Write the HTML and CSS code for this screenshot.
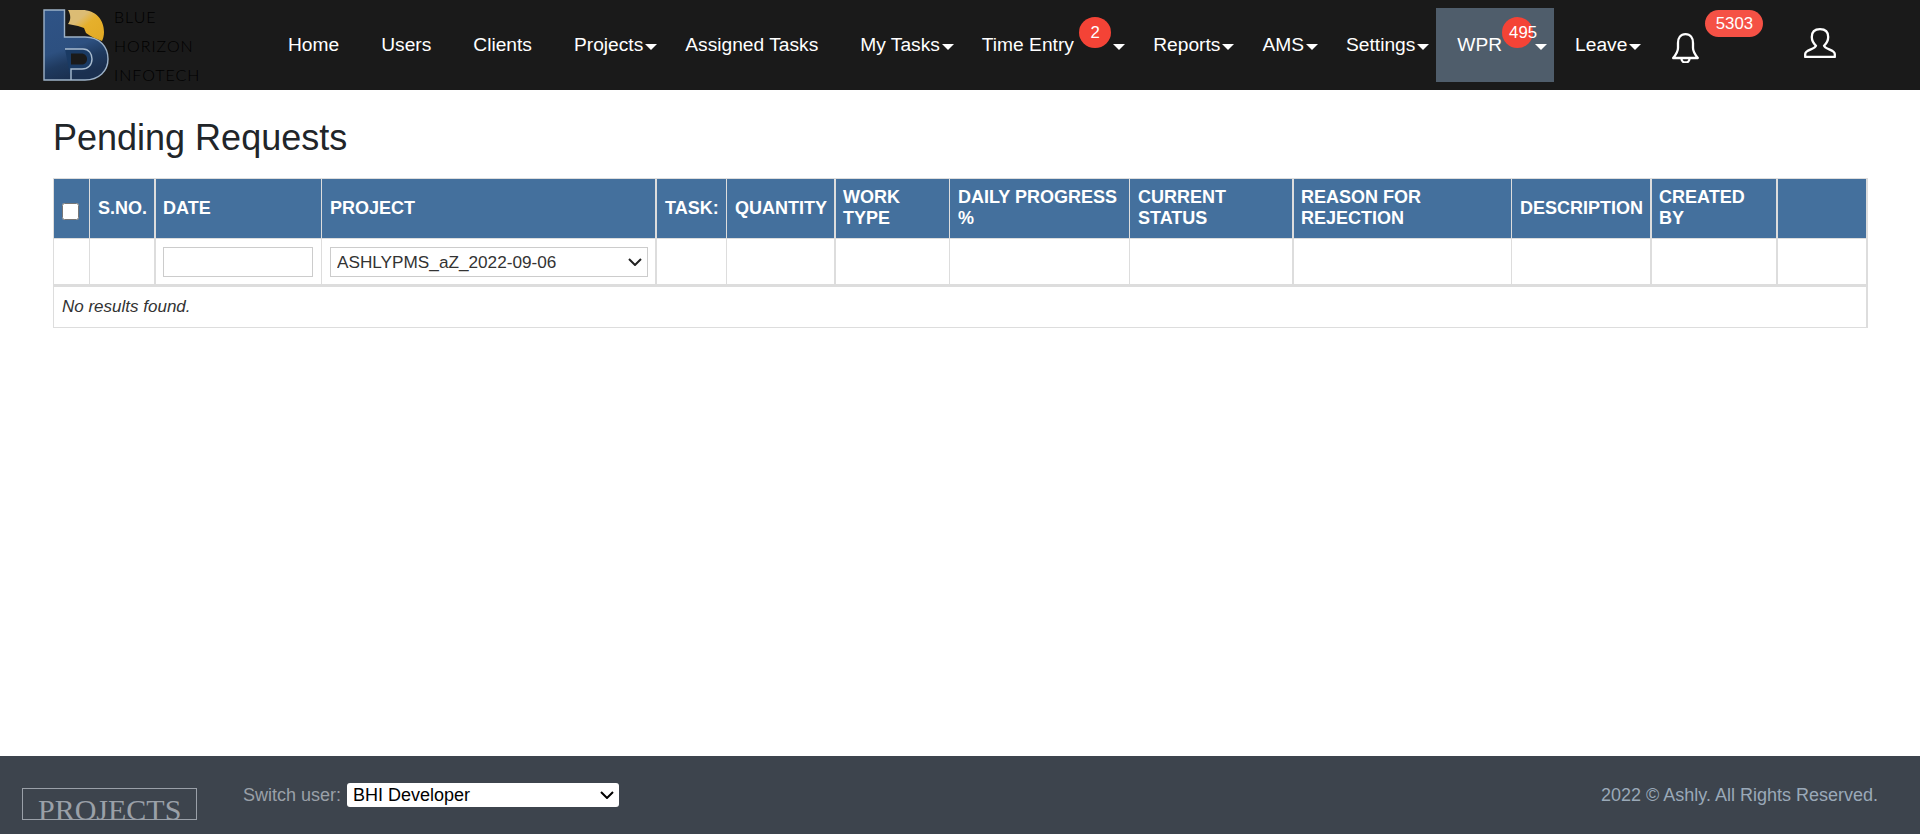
FILE: index.html
```html
<!DOCTYPE html>
<html lang="en">
<head>
<meta charset="utf-8">
<title>Pending Requests</title>
<link rel="stylesheet" href="styles.css">
</head>
<body>
<header class="topbar">
  <a class="brand" href="#">
    <svg class="brand-mark" viewBox="0 0 66 72" aria-hidden="true">
      <defs>
        <linearGradient id="blueFill" x1="0" y1="0" x2="0.3" y2="1">
          <stop offset="0" stop-color="#2f5386"/>
          <stop offset="0.6" stop-color="#2d5080"/>
          <stop offset="0.8" stop-color="#1f3a5f"/>
          <stop offset="1" stop-color="#1b3050"/>
        </linearGradient>
        <linearGradient id="goldFill" x1="0" y1="0" x2="1" y2="1">
          <stop offset="0.3" stop-color="#dcbc74"/>
          <stop offset="0.5" stop-color="#e6b02c"/>
          <stop offset="1" stop-color="#e2a923"/>
        </linearGradient>
      </defs>
      <path d="M1 1H21.500V28H42C57 28 65 38 65 50C65 62 56 71 42 71H1Z" fill="url(#blueFill)" stroke="#9db2c8" stroke-width="1.400"/>
      <path d="M22 40H40C46 40 49 45 49 50C49 56 45 60 39 60H28V71" fill="#1a3a63" stroke="#a9bccf" stroke-width="1.400"/>
      <path d="M28 44.500H38C42 44.500 44 47 44 50C44 53.500 42 55.500 38 55.500H28Z" fill="#1a1a1a"/>
      <path d="M25 1H39C53 1 61 11 61 23C61 27 60 30 59 32C53 30 47 27 43 24L41 19L35 17L25 15C28 11 28 6 25 1Z" fill="url(#goldFill)"/>
    </svg>
    <span class="brand-name">
      <span>BLUE</span>
      <span>HORIZON</span>
      <span>INFOTECH</span>
    </span>
  </a>

  <nav class="nav">
    <a class="nav-item" href="#">Home</a>
    <a class="nav-item" href="#">Users</a>
    <a class="nav-item" href="#">Clients</a>
    <a class="nav-item" href="#"><span class="label caret">Projects</span></a>
    <a class="nav-item" href="#">Assigned Tasks</a>
    <a class="nav-item" href="#"><span class="label caret">My Tasks</span></a>
    <a class="nav-item" href="#"><span class="label caret">Time Entry <span class="badge badge-time">2</span></span></a>
    <a class="nav-item" href="#"><span class="label caret">Reports</span></a>
    <a class="nav-item" href="#"><span class="label caret">AMS</span></a>
    <a class="nav-item" href="#"><span class="label caret">Settings</span></a>
    <a class="nav-item nav-item-active" href="#"><span class="label caret">WPR<span class="badge badge-wpr">495</span></span></a>
    <a class="nav-item" href="#"><span class="label caret">Leave</span></a>
    <a class="bell" href="#">
      <svg class="bell-icon" viewBox="0 0 27 30" aria-hidden="true">
        <path d="M13.500 1.200C8.500 1.200 6 5 6 10V15C6 19 4 21.500 1.200 25H25.800C23 21.500 21 19 21 15V10C21 5 18.500 1.200 13.500 1.200Z"/>
        <path d="M9.500 25.500A4 4 0 0 0 17.500 25.500"/>
      </svg>
      <span class="badge-count">5303</span>
    </a>
    <a class="user" href="#">
      <svg class="user-icon" viewBox="0 0 32 30" aria-hidden="true">
        <path d="M1.200 29V26C1.200 21.500 11 21.500 12 17.800C9 15 7.800 11.500 7.800 9C7.800 4 11 1.200 16 1.200C21 1.200 24.200 4 24.200 9C24.200 11.500 23 15 20 17.800C21 21.500 30.800 21.500 30.800 26V29Z"/>
      </svg>
    </a>
  </nav>
</header>

<main class="content">
  <h1 class="title">Pending Requests</h1>
  <table class="grid">
    <colgroup>
      <col class="c-check"><col class="c-sno"><col class="c-date"><col class="c-project"><col class="c-task"><col class="c-qty"><col class="c-type"><col class="c-progress"><col class="c-status"><col class="c-reason"><col class="c-desc"><col class="c-by"><col class="c-action">
    </colgroup>
    <thead>
      <tr class="head-row">
        <th class="check-cell"><input class="check" type="checkbox"></th>
        <th>S.NO.</th>
        <th class="thick">DATE</th>
        <th>PROJECT</th>
        <th class="thick task-cell">TASK:</th>
        <th>QUANTITY</th>
        <th class="thick">WORK TYPE</th>
        <th>DAILY PROGRESS %</th>
        <th>CURRENT STATUS</th>
        <th class="thick">REASON FOR REJECTION</th>
        <th>DESCRIPTION</th>
        <th class="thick">CREATED BY</th>
        <th class="thick"></th>
      </tr>
      <tr class="filter-row">
        <td></td>
        <td></td>
        <td class="thick"><input class="field" type="text"></td>
        <td class="project-cell"><select class="field field-select"><option>ASHLYPMS_aZ_2022-09-06</option></select></td>
        <td class="thick"></td>
        <td></td>
        <td class="thick"></td>
        <td></td>
        <td></td>
        <td class="thick"></td>
        <td></td>
        <td class="thick"></td>
        <td class="thick"></td>
      </tr>
    </thead>
    <tbody>
      <tr class="empty-row">
        <td colspan="13">No results found.</td>
      </tr>
    </tbody>
  </table>
</main>

<footer class="footer">
  <div class="footer-logo">PROJECTS</div>
  <label class="switch">Switch user:
    <select class="switch-select"><option>BHI Developer</option></select>
  </label>
  <p class="copyright">2022 © Ashly. All Rights Reserved.</p>
</footer>
</body>
</html>
```
FILE: styles.css
```css
* { box-sizing: border-box; }

html, body { height: 100%; }

body {
  margin: 0;
  display: flex;
  flex-direction: column;
  min-height: 100vh;
  font-family: "Liberation Sans", Arial, sans-serif;
  color: #212529;
  background: #fff;
}

a { color: inherit; text-decoration: none; }

.topbar {
  flex: none;
  height: 90px;
  background: #1a1a1a;
  display: flex;
  align-items: center;
  padding-left: 43px;
}

.brand {
  width: 224px;
  height: 90px;
  display: flex;
  align-items: flex-start;
  gap: 5px;
  overflow: hidden;
}

.brand-mark {
  width: 66px;
  height: 72px;
  margin-top: 9px;
  flex: none;
}

.brand-name {
  display: flex;
  flex-direction: column;
  margin-top: 2px;
  font-family: Lato, "Liberation Sans", sans-serif;
  font-weight: 300;
  font-size: 16px;
  line-height: 29px;
  letter-spacing: 1px;
  color: #000;
}

.nav {
  display: flex;
  align-items: center;
  font-size: 19.2px;
  color: #fff;
}

.nav-item {
  height: 74px;
  padding: 0 21px;
  display: flex;
  align-items: center;
  white-space: nowrap;
}

.nav-item-active { background: #4f5d6b; }

.label { position: relative; display: block; }

.caret::after {
  content: "";
  position: absolute;
  left: 100%;
  top: 10px;
  margin-left: 2px;
  border-top: 6px solid #fff;
  border-left: 6px solid transparent;
  border-right: 6px solid transparent;
}

.badge {
  display: inline-block;
  vertical-align: top;
  height: 31px;
  margin-top: -17px;
  margin-bottom: -17px;
  border-radius: 50%;
  background: #f44336;
  font-size: 16.800px;
  line-height: 31px;
  color: #fff;
}

.badge-time { width: 32px; text-align: center; }
.badge-wpr { width: 31px; padding-left: 7px; white-space: nowrap; }

.bell {
  position: relative;
  display: block;
  margin-left: 24px;
  width: 27px;
  height: 30px;
  margin-top: 6px;
}

.bell-icon, .user-icon {
  display: block;
  fill: none;
  stroke: #fff;
  stroke-width: 2.300;
  stroke-linejoin: round;
}

.bell-icon { width: 27px; height: 30px; }

.badge-count {
  position: absolute;
  left: 33px;
  top: -23px;
  width: 58px;
  height: 27px;
  border-radius: 14px;
  background: #f55145;
  font-size: 16.800px;
  line-height: 27px;
  text-align: center;
  color: #fff;
}

.user { display: block; margin-left: 105px; margin-top: -4px; }
.user-icon { width: 32px; height: 30px; }

.content {
  flex: 1;
  padding: 26px 53px 0;
}

.title {
  margin: 0 0 19px;
  font-size: 36px;
  font-weight: 400;
  line-height: 43px;
  color: #212529;
}

.grid {
  width: 1812px;
  table-layout: fixed;
  border-collapse: separate;
  border-spacing: 0;
  border-top: 1px solid #ddd;
  border-left: 1px solid #ddd;
  border-right: 2px solid #ddd;
  border-bottom: 1px solid #ddd;
}

.c-check { width: 35px; }
.c-sno { width: 65px; }
.c-date { width: 167px; }
.c-project { width: 334px; }
.c-task { width: 71px; }
.c-qty { width: 108px; }
.c-type { width: 115px; }
.c-progress { width: 180px; }
.c-status { width: 163px; }
.c-reason { width: 219px; }
.c-desc { width: 139px; }
.c-by { width: 126px; }
.c-action { width: 90px; }

.grid th, .grid td { padding: 0 8px; }

.grid th {
  height: 60px;
  background: #44709d;
  color: #fff;
  font-size: 18px;
  font-weight: 700;
  line-height: 21px;
  text-align: left;
  vertical-align: middle;
  padding-bottom: 1px;
}

.grid th + th { border-left: 1px solid #ddd; }
.grid th.thick, .grid td.thick { border-left-width: 2px; padding-left: 7px; }
.grid th.task-cell { padding-left: 8px; }
.grid td.project-cell { padding-right: 7px; }

.head-row th { border-bottom: 1px solid #ddd; }

.check-cell { text-align: center; }

.check {
  width: 17px;
  height: 17px;
  margin: 6px 0 0;
  display: block;
}

.filter-row td {
  height: 48px;
  padding-top: 1px;
  border-bottom: 3px solid #ddd;
  vertical-align: middle;
}

.filter-row td + td { border-left: 1px solid #ddd; }

.field {
  display: block;
  width: 100%;
  height: 30px;
  border: 1px solid #ccc;
  border-radius: 0;
  background: #fff;
  padding: 0 6px;
  font-family: inherit;
  font-size: 17.200px;
  color: #333;
}

.field-select {
  appearance: none;
  background: #fff url("data:image/svg+xml,%3Csvg xmlns='http://www.w3.org/2000/svg' width='14' height='8' viewBox='0 0 14 8'%3E%3Cpath d='M1 1l6 6 6-6' fill='none' stroke='%23222' stroke-width='2'/%3E%3C/svg%3E") no-repeat right 5px center;
}

.empty-row td {
  height: 40px;
  font-size: 17px;
  font-style: italic;
  color: #333;
  vertical-align: middle;
}

.footer {
  flex: none;
  height: 78px;
  background: #3d444d;
  display: flex;
  align-items: flex-start;
  padding: 26px 42px 0 22px;
  font-size: 18px;
  color: #9aa9b8;
}

.footer-logo {
  width: 175px;
  height: 32px;
  margin-top: 6px;
  padding: 4px 0 0 15px;
  border: 1px solid #9aa0a8;
  overflow: hidden;
  font-family: "Liberation Serif", serif;
  font-size: 30px;
  line-height: 34px;
  color: #9aa0a8;
}

.switch {
  margin-left: 46px;
  margin-top: 1px;
  display: flex;
  align-items: center;
  gap: 5px;
  line-height: 24px;
  color: #9aa0a8;
}

.switch-select {
  appearance: none;
  width: 272px;
  height: 24px;
  margin-left: 1px;
  border: 0;
  border-radius: 3px;
  background: #fff url("data:image/svg+xml,%3Csvg xmlns='http://www.w3.org/2000/svg' width='14' height='8' viewBox='0 0 14 8'%3E%3Cpath d='M1 1l6 6 6-6' fill='none' stroke='%23000' stroke-width='2'/%3E%3C/svg%3E") no-repeat right 5px center;
  padding: 0 0 0 6px;
  font-family: inherit;
  font-size: 18px;
  color: #000;
}

.copyright {
  margin: 1px 0 0 auto;
  line-height: 24px;
}
```
